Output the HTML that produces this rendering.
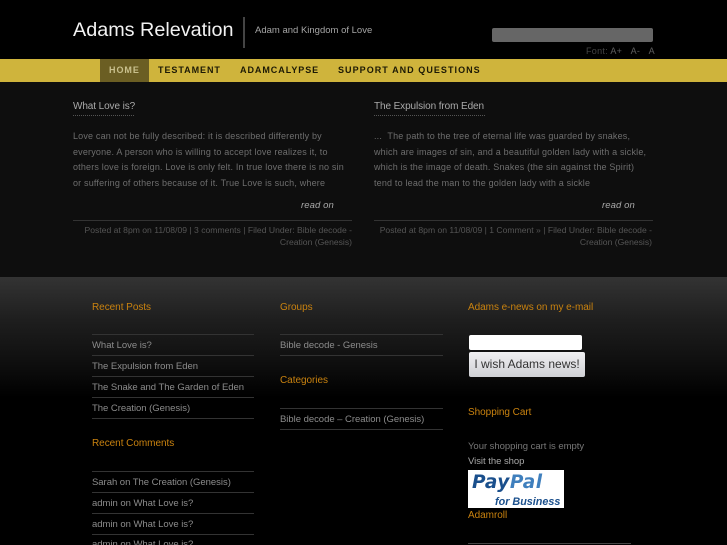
<!DOCTYPE html>
<html><head><meta charset="utf-8"><style>
*{margin:0;padding:0;box-sizing:border-box}
html,body{width:727px;height:545px;overflow:hidden;background:#000}
body{position:relative;font-family:"Liberation Sans",sans-serif;filter:blur(.3px)}
.a{position:absolute;white-space:nowrap}
.p{font-size:9px;color:#6e6e6e;letter-spacing:.18px;line-height:12px}
.m{font-size:8.6px;color:#555;line-height:12px;text-align:right}
.h{font-size:10px;color:#c9820f;line-height:12px;letter-spacing:-.04px}
.l{font-size:9.5px;color:#8c8c8c;line-height:12px;letter-spacing:-.03px}
.r{position:absolute;height:1px;background:#333}
.n{font-size:9px;font-weight:bold;letter-spacing:.95px;color:#1d1a05;line-height:12px}
.t{font-size:10px;color:#aaa;line-height:12px;letter-spacing:-.1px}
.dot{position:absolute;height:1px;background-image:linear-gradient(90deg,#555 50%,transparent 50%);background-size:2px 1px}
</style></head><body>
<div class="a" style="left:0;top:82px;width:727px;height:195px;background:#0e0e0e"></div>
<div class="a" style="left:0;top:277px;width:727px;height:120px;background:linear-gradient(#333,#1e1e1e 36%,#0f0f0f 70%,#000)"></div>
<div class="a" style="left:0;top:59px;width:727px;height:23px;background:#cfb43c"></div>
<div class="a" style="left:100px;top:59px;width:49px;height:23px;background:#6b5e23"></div>

<div class="a" style="left:73px;top:18px;font-size:19.8px;line-height:25px;color:#f2f2f2">Adams Relevation</div>
<div class="a" style="left:243px;top:17px;width:2px;height:31px;background:#444"></div>
<div class="a" style="left:255px;top:25px;font-size:9.5px;line-height:12px;color:#a5a5a5">Adam and Kingdom of Love</div>
<div class="a" style="left:492px;top:28px;width:161px;height:14px;background:#666;border-radius:2px"></div>
<div class="a" style="left:586px;top:45px;font-size:9px;line-height:12px;color:#444;letter-spacing:.3px">Font: <span style="color:#5f5f5f">A+ &nbsp;&nbsp;A- &nbsp;&nbsp;A</span></div>

<div class="a n" style="left:109px;top:64px;color:#c9c08d">HOME</div>
<div class="a n" style="left:158px;top:64px">TESTAMENT</div>
<div class="a n" style="left:240px;top:64px">ADAMCALYPSE</div>
<div class="a n" style="left:338px;top:64px;letter-spacing:1.05px">SUPPORT AND QUESTIONS</div>

<div class="a t" style="left:73px;top:101px">What Love is?</div>
<div class="dot" style="left:73px;top:115px;width:62px"></div>
<div class="a t" style="left:374px;top:101px">The Expulsion from Eden</div>
<div class="dot" style="left:374px;top:115px;width:111px"></div>

<div class="a p" style="left:73px;top:130px">Love can not be fully described: it is described differently by</div>
<div class="a p" style="left:73px;top:146px">everyone. A person who is willing to accept love realizes it, to</div>
<div class="a p" style="left:73px;top:161px">others love is foreign. Love is only felt. In true love there is no sin</div>
<div class="a p" style="left:73px;top:177px">or suffering of others because of it. True Love is such, where</div>
<div class="a" style="left:301px;top:200px;font-size:9.5px;line-height:12px;font-style:italic;color:#a8a8a8;letter-spacing:.1px">read on</div>
<div class="r" style="left:73px;top:220px;width:279px"></div>
<div class="a m" style="left:73px;top:224px;width:279px">Posted at 8pm on 11/08/09 | 3 comments | Filed Under: Bible decode -</div>
<div class="a m" style="left:73px;top:236px;width:279px">Creation (Genesis)</div>

<div class="a p" style="left:374px;top:130px">... &nbsp;The path to the tree of eternal life was guarded by snakes,</div>
<div class="a p" style="left:374px;top:146px">which are images of sin, and a beautiful golden lady with a sickle,</div>
<div class="a p" style="left:374px;top:161px">which is the image of death. Snakes (the sin against the Spirit)</div>
<div class="a p" style="left:374px;top:177px">tend to lead the man to the golden lady with a sickle</div>
<div class="a" style="left:602px;top:200px;font-size:9.5px;line-height:12px;font-style:italic;color:#a8a8a8;letter-spacing:.1px">read on</div>
<div class="r" style="left:374px;top:220px;width:279px"></div>
<div class="a m" style="left:374px;top:224px;width:278px">Posted at 8pm on 11/08/09 | 1 Comment » | Filed Under: Bible decode -</div>
<div class="a m" style="left:374px;top:236px;width:278px">Creation (Genesis)</div>

<div class="a h" style="left:92px;top:302px">Recent Posts</div>
<div class="r" style="left:92px;top:334px;width:162px"></div>
<div class="a l" style="left:92px;top:340px">What Love is?</div>
<div class="r" style="left:92px;top:355px;width:162px"></div>
<div class="a l" style="left:92px;top:361px">The Expulsion from Eden</div>
<div class="r" style="left:92px;top:376px;width:162px"></div>
<div class="a l" style="left:92px;top:382px">The Snake and The Garden of Eden</div>
<div class="r" style="left:92px;top:397px;width:162px"></div>
<div class="a l" style="left:92px;top:403px">The Creation (Genesis)</div>
<div class="r" style="left:92px;top:418px;width:162px"></div>
<div class="a h" style="left:92px;top:438px">Recent Comments</div>
<div class="r" style="left:92px;top:471px;width:162px"></div>
<div class="a l" style="left:92px;top:477px">Sarah on The Creation (Genesis)</div>
<div class="r" style="left:92px;top:492px;width:162px"></div>
<div class="a l" style="left:92px;top:498px">admin on What Love is?</div>
<div class="r" style="left:92px;top:513px;width:162px"></div>
<div class="a l" style="left:92px;top:519px">admin on What Love is?</div>
<div class="r" style="left:92px;top:534px;width:162px"></div>
<div class="a l" style="left:92px;top:539px">admin on What Love is?</div>

<div class="a h" style="left:280px;top:302px">Groups</div>
<div class="r" style="left:280px;top:334px;width:163px"></div>
<div class="a l" style="left:280px;top:340px">Bible decode - Genesis</div>
<div class="r" style="left:280px;top:355px;width:163px"></div>
<div class="a h" style="left:280px;top:375px">Categories</div>
<div class="r" style="left:280px;top:408px;width:163px"></div>
<div class="a l" style="left:280px;top:414px">Bible decode – Creation (Genesis)</div>
<div class="r" style="left:280px;top:429px;width:163px"></div>

<div class="a h" style="left:468px;top:302px">Adams e-news on my e-mail</div>
<div class="a" style="left:469px;top:335px;width:113px;height:15px;background:#fff;border-radius:2px"></div>
<div class="a" style="left:469px;top:352px;width:116px;height:25px;background:linear-gradient(#f0f0f2,#cfd0d4);border-radius:2px;font-size:12px;line-height:24px;color:#333;text-align:center">I wish Adams news!</div>
<div class="a h" style="left:468px;top:407px">Shopping Cart</div>
<div class="a l" style="left:468px;top:441px;color:#777">Your shopping cart is empty</div>
<div class="a l" style="left:468px;top:456px;color:#a8a8a8">Visit the shop</div>
<div class="a" style="left:468px;top:470px;width:96px;height:38px;background:#fff;overflow:hidden">
<div class="a" style="left:4px;top:3px;font-family:'DejaVu Sans',sans-serif;font-size:18.5px;line-height:20px;font-weight:bold;font-style:italic;letter-spacing:.5px;color:#1a4f8c">Pay<span style="color:#3f7fbd">Pal</span></div>
<div class="a" style="left:27px;top:26px;font-size:10.8px;line-height:12px;font-weight:bold;font-style:italic;color:#1a4f8c">for Business</div>
</div>
<div class="a h" style="left:468px;top:510px">Adamroll</div>
<div class="r" style="left:468px;top:543px;width:163px;height:1px;background:#444"></div>
</body></html>
